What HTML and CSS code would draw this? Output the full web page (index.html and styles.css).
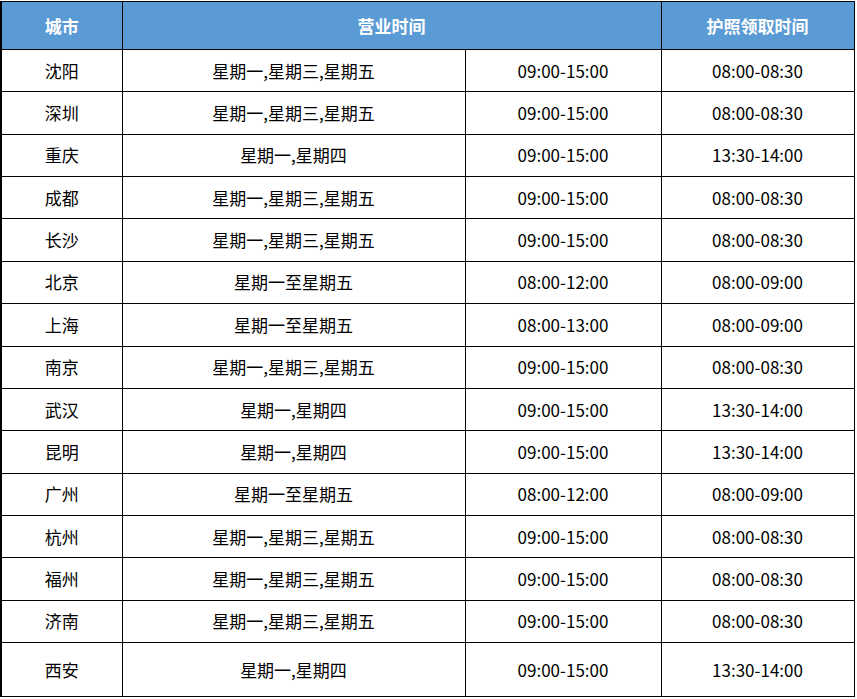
FILE: index.html
```html
<!DOCTYPE html>
<html lang="zh-CN">
<head>
<meta charset="utf-8">
<title>护照领取时间</title>
<link rel="stylesheet" href="styles.css">
</head>
<body>
<table class="sched">
  <colgroup>
    <col class="c1"><col class="c2"><col class="c3"><col class="c4">
  </colgroup>
  <thead>
    <tr class="head"><th>城市</th><th colspan="2">营业时间</th><th>护照领取时间</th></tr>
  </thead>
  <tbody>
    <tr><td>沈阳</td><td>星期一,星期三,星期五</td><td>09:00-15:00</td><td>08:00-08:30</td></tr>
    <tr><td>深圳</td><td>星期一,星期三,星期五</td><td>09:00-15:00</td><td>08:00-08:30</td></tr>
    <tr><td>重庆</td><td>星期一,星期四</td><td>09:00-15:00</td><td>13:30-14:00</td></tr>
    <tr><td>成都</td><td>星期一,星期三,星期五</td><td>09:00-15:00</td><td>08:00-08:30</td></tr>
    <tr><td>长沙</td><td>星期一,星期三,星期五</td><td>09:00-15:00</td><td>08:00-08:30</td></tr>
    <tr><td>北京</td><td>星期一至星期五</td><td>08:00-12:00</td><td>08:00-09:00</td></tr>
    <tr><td>上海</td><td>星期一至星期五</td><td>08:00-13:00</td><td>08:00-09:00</td></tr>
    <tr><td>南京</td><td>星期一,星期三,星期五</td><td>09:00-15:00</td><td>08:00-08:30</td></tr>
    <tr><td>武汉</td><td>星期一,星期四</td><td>09:00-15:00</td><td>13:30-14:00</td></tr>
    <tr><td>昆明</td><td>星期一,星期四</td><td>09:00-15:00</td><td>13:30-14:00</td></tr>
    <tr><td>广州</td><td>星期一至星期五</td><td>08:00-12:00</td><td>08:00-09:00</td></tr>
    <tr><td>杭州</td><td>星期一,星期三,星期五</td><td>09:00-15:00</td><td>08:00-08:30</td></tr>
    <tr><td>福州</td><td>星期一,星期三,星期五</td><td>09:00-15:00</td><td>08:00-08:30</td></tr>
    <tr><td>济南</td><td>星期一,星期三,星期五</td><td>09:00-15:00</td><td>08:00-08:30</td></tr>
    <tr class="last"><td>西安</td><td>星期一,星期四</td><td>09:00-15:00</td><td>13:30-14:00</td></tr>
  </tbody>
</table>
</body>
</html>
```

FILE: styles.css
```css
html, body {
  margin: 0;
  padding: 0;
  background: #ffffff;
}

body {
  padding-top: 1px;
  font-family: "Noto Sans CJK SC", "Microsoft YaHei", sans-serif;
  font-size: 17px;
  color: #000000;
}

.sched {
  border-collapse: collapse;
  table-layout: fixed;
  width: 853px;
  border-left: 2px solid #000;
}

.c1 { width: 121px; }
.c2 { width: 343px; }
.c3 { width: 196px; }
.c4 { width: 193px; }

.sched th,
.sched td {
  border: 1px solid #000;
  padding: 0;
  text-align: center;
  vertical-align: middle;
  line-height: 20px;
  white-space: nowrap;
}

.sched td:first-child,
.sched th:first-child {
  border-left: 2px solid #000;
}

.head {
  height: 48px;
}

.head th {
  background: #5b9bd5;
  color: #ffffff;
  font-weight: bold;
}

.sched tbody tr {
  height: 42.36px;
}

.sched tbody tr.last {
  height: 54px;
}
```
